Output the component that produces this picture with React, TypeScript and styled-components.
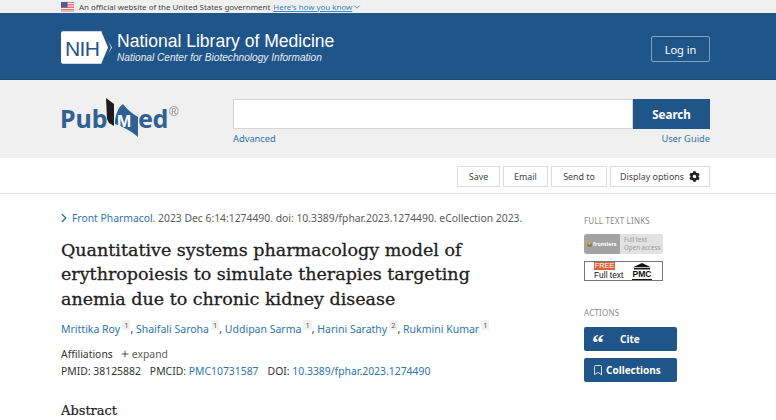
import React from 'react';
import styled, { createGlobalStyle } from 'styled-components';
import { Bookmark, ChevronDown, ChevronRight, Plus } from 'lucide-react';
import { FaCog } from 'react-icons/fa';

const Global = createGlobalStyle`
  html, body { margin: 0; padding: 0; background: #fff; }
  body { width: 776px; height: 420px; overflow: hidden; font-family: "Noto Sans", "Open Sans", sans-serif; color: #212121; }
  a { color: #2e75ad; text-decoration: none; }
`;

const Wrap = styled.div`
  padding: 0 66px 0 61px;
`;

const Banner = styled.div`
  height: 13px;
  background: #f0f0f0;
  overflow: hidden;
`;

const BannerRow = styled(Wrap)`
  display: flex;
  align-items: center;
  height: 13px;
  font-size: 7.95px;
  color: #444;
  svg.flag { margin-right: 5px; }
`;

const HowLink = styled.a`
  display: inline-flex;
  align-items: center;
  margin-left: 3px;
  color: #3b85c0;
  text-decoration: underline;
`;

const Header = styled.div`
  height: 67px;
  background: #20558a;
  border-bottom: 1px solid #1a4a78;
  box-sizing: border-box;
`;

const HeaderRow = styled(Wrap)`
  display: flex;
  align-items: center;
  justify-content: space-between;
  height: 100%;
  padding-top: 3px;
  box-sizing: border-box;
`;

const Brand = styled.div`
  display: flex;
  align-items: center;
  gap: 5px;
  color: #fff;
  font-family: "Liberation Sans", Arial, sans-serif;
`;

const BrandName = styled.div`
  font-size: 17.55px;
  line-height: 21px;
`;

const BrandSub = styled.div`
  font-size: 10.15px;
  font-style: italic;
  line-height: 12px;
  color: #e6edf4;
`;

const LoginButton = styled.button`
  width: 59px;
  height: 26px;
  margin-top: 3px;
  padding: 0;
  background: transparent;
  border: 1px solid #7fa3c5;
  border-radius: 2px;
  color: #fff;
  font: 11px "Noto Sans", sans-serif;
`;

const SearchArea = styled.div`
  height: 78px;
  background: #f0f0f0;
`;

const SearchRow = styled(Wrap)`
  display: flex;
  gap: 52px;
  padding-top: 19px;
`;

const Logo = styled.div`
  width: 120px;
  margin-top: -3px;
`;

const SearchBlock = styled.div`
  flex: 1;
`;

const SearchBox = styled.div`
  display: flex;
  height: 30px;
`;

const SearchInput = styled.div`
  flex: 1;
  box-sizing: border-box;
  background: #fff;
  border: 1px solid #d6d6d6;
`;

const SearchButton = styled.button`
  width: 77px;
  padding: 0;
  border: 0;
  background: #20558a;
  color: #fff;
  font: 700 11.6px "Noto Sans", sans-serif;
`;

const SearchLinks = styled.div`
  display: flex;
  justify-content: space-between;
  margin-top: 3px;
  font-size: 9.3px;
  line-height: 14px;
`;

const Toolbar = styled(Wrap)`
  display: flex;
  justify-content: flex-end;
  gap: 3px;
  height: 36px;
  padding-top: 8px;
  box-sizing: border-box;
  border-bottom: 1px solid #e4e4e4;
`;

const ToolButton = styled.button<{ $w: number }>`
  display: flex;
  align-items: center;
  justify-content: center;
  gap: 5px;
  width: ${(p) => p.$w}px;
  height: 21px;
  padding: 0;
  background: #fff;
  border: 1px solid #dcdcdc;
  color: #444;
  font: 8.9px "Noto Sans", sans-serif;
`;

const Main = styled(Wrap)`
  display: flex;
  justify-content: space-between;
`;

const Article = styled.div`
  width: 480px;
  padding-top: 16px;
`;

const Citation = styled.div`
  display: flex;
  align-items: center;
  font-size: 10.35px;
  line-height: 16px;
  color: #5b5b5b;
  white-space: pre;
  svg { margin: 0 1px 0 -4px; color: #2e75ad; }
`;

const Title = styled.h1`
  margin: 12px 0 0;
  width: 440px;
  font-family: "DejaVu Serif", serif;
  font-size: 17.5px;
  font-weight: 400;
  -webkit-text-stroke: 0.3px #212121;
  line-height: 24.3px;
  color: #212121;
`;

const Authors = styled.div`
  margin-top: 10px;
  font-size: 10.5px;
  line-height: 16px;
  color: #333;
  white-space: nowrap;
  sup { margin-left: 2px; padding: 0 2px; background: #f1f1f1; color: #555; font-size: 7.5px; line-height: 0; }
`;

const AffiliationRow = styled.div`
  display: flex;
  align-items: center;
  margin-top: 9px;
  font-size: 10.4px;
  line-height: 16px;
  color: #333;
`;

const Expand = styled.span`
  display: inline-flex;
  align-items: center;
  gap: 2px;
  margin-left: 7px;
  color: #5b5b5b;
`;

const Ids = styled.div`
  display: flex;
  gap: 9px;
  margin-top: 1px;
  font-size: 10.4px;
  line-height: 16px;
  color: #333;
`;

const AbstractTitle = styled.h2`
  margin: 23px 0 0;
  font-family: "DejaVu Serif", serif;
  font-size: 13px;
  font-weight: 400;
  line-height: 18px;
  -webkit-text-stroke: 0.2px #212121;
`;

const Side = styled.div`
  width: 126px;
  padding-top: 21px;
`;

const SideHeading = styled.div<{ $gap?: number }>`
  margin-top: ${(p) => p.$gap ?? 0}px;
  font-size: 8px;
  line-height: 12px;
  color: #8a8a8a;
  letter-spacing: 0.2px;
`;

const FrontiersBadge = styled.div`
  display: flex;
  width: 79px;
  height: 20px;
  margin-top: 7px;
  border-radius: 3px;
  overflow: hidden;
  background: #e2e2e2;
`;

const FrontiersName = styled.div`
  display: flex;
  align-items: center;
  gap: 1px;
  width: 36px;
  padding-left: 3px;
  box-sizing: border-box;
  background: #a3a3a3;
  color: #fff;
  font-size: 5.4px;
  font-weight: 700;
`;

const FrontiersDot = styled.span`
  width: 5px;
  height: 5px;
  border-radius: 50%;
  background: conic-gradient(#d8b13a, #c8503c, #4c9a52, #d8b13a);
`;

const FrontiersText = styled.div`
  padding: 2px 0 0 4px;
  color: #9a9a9a;
  font-size: 6.2px;
  line-height: 8px;
  white-space: nowrap;
`;

const PmcBadge = styled.div`
  display: flex;
  justify-content: space-between;
  box-sizing: border-box;
  width: 79px;
  height: 20px;
  margin-top: 7px;
  padding: 0 10px 0 9px;
  border: 1px solid #777;
  background: #fff;
`;

const FreeLabel = styled.div`
  font-family: "Liberation Sans", sans-serif;
  color: #111;
  font-size: 8.4px;
  line-height: 10px;
  span { display: block; width: 21px; background: #d9643a; color: #fff; text-align: center; line-height: 8px; font-size: 7.4px; }
`;

const PmcMark = styled.div`
  display: flex;
  flex-direction: column;
  align-items: center;
  font: 700 8.6px/9px "Liberation Sans", sans-serif;
  color: #111;
  b { border-bottom: 1px solid #111; }
`;

const ActionButton = styled.button<{ $gap?: number }>`
  display: flex;
  align-items: center;
  gap: 2px;
  width: 93px;
  height: 24px;
  margin-top: ${(p) => p.$gap ?? 7}px;
  padding: 0 0 0 8px;
  border: 0;
  border-radius: 2px;
  background: #20558a;
  color: #fff;
  font: 700 10px "Noto Sans", sans-serif;
`;

const QuoteMark = styled.span`
  width: 24px;
  margin-right: 2px;
  text-align: left;
  font: 700 24px/10px "Liberation Serif", serif;
  transform: translateY(3px);
`;

const NihLogo = () => (
  <svg width="51" height="33" viewBox="0 0 52 33">
    <path d="M2 0H42L52 16.5 42 33H2Q0 33 0 31V2Q0 0 2 0Z" fill="#fff" />
    <path d="M44 0L51 16.5 44 33H41L48 16.5 41 0Z" fill="#20558a" />
    <text x="4" y="25" fontFamily="Liberation Sans" fontSize="21.5" fill="#20558a" letterSpacing="-0.6">NIH</text>
  </svg>
);

const UsFlag = () => (
  <svg className="flag" width="13" height="10" viewBox="0 0 13 10">
    <rect width="13" height="10" fill="#e2786e" />
    <path d="M0 1.5H13M0 4H13M0 6.5H13M0 9H13" stroke="#f6f0ee" strokeWidth="1" />
    <rect width="6.5" height="5.5" fill="#4a5f9a" />
  </svg>
);

const PubMedLogo = () => (
  <svg width="122" height="46" viewBox="0 0 122 46">
    <text x="-1" y="32" fontFamily="Noto Sans" fontWeight="700" fontSize="25" fill="#2f6195">Pub</text>
    <path d="M45 2L53 8V30L48 27 46 23Z" fill="#1c1c1c" />
    <path d="M54 24Q56 12 62 8 68 16 77 21V41Q68 33 54 28Z" fill="#2f6195" />
    <text x="56" y="31" fontFamily="Liberation Sans" fontWeight="700" fontSize="17" fill="#fff">M</text>
    <text x="77" y="32" fontFamily="Noto Sans" fontWeight="700" fontSize="25" fill="#2f6195" letterSpacing="-0.5">ed</text>
    <text x="108" y="20" fontFamily="Liberation Sans" fontSize="13" fill="#8a8a8a">®</text>
  </svg>
);

export default function App() {
  return (
    <>
      <Global />
      <Banner>
        <BannerRow>
          <UsFlag />
          An official website of the United States government
          <HowLink href="#">
            Here's how you know
            <ChevronDown size={10} strokeWidth={2} />
          </HowLink>
        </BannerRow>
      </Banner>
      <Header>
        <HeaderRow>
          <Brand>
            <NihLogo />
            <div>
              <BrandName>National Library of Medicine</BrandName>
              <BrandSub>National Center for Biotechnology Information</BrandSub>
            </div>
          </Brand>
          <LoginButton>Log in</LoginButton>
        </HeaderRow>
      </Header>
      <SearchArea>
        <SearchRow>
          <Logo>
            <PubMedLogo />
          </Logo>
          <SearchBlock>
            <SearchBox>
              <SearchInput />
              <SearchButton>Search</SearchButton>
            </SearchBox>
            <SearchLinks>
              <a href="#">Advanced</a>
              <a href="#">User Guide</a>
            </SearchLinks>
          </SearchBlock>
        </SearchRow>
      </SearchArea>
      <Toolbar>
        <ToolButton $w={43}>Save</ToolButton>
        <ToolButton $w={45}>Email</ToolButton>
        <ToolButton $w={56}>Send to</ToolButton>
        <ToolButton $w={100}>
          Display options
          <FaCog size={11} color="#222" />
        </ToolButton>
      </Toolbar>
      <Main>
        <Article>
          <Citation>
            <ChevronRight size={14} strokeWidth={2.5} />
            <a href="#">Front Pharmacol</a>. 2023 Dec 6:14:1274490. doi: 10.3389/fphar.2023.1274490. eCollection 2023.
          </Citation>
          <Title>Quantitative systems pharmacology model of erythropoiesis to simulate therapies targeting anemia due to chronic kidney disease</Title>
          <Authors>
            <a href="#">Mrittika Roy</a><sup>1</sup>, <a href="#">Shaifali Saroha</a><sup>1</sup>, <a href="#">Uddipan Sarma</a><sup>1</sup>, <a href="#">Harini Sarathy</a><sup>2</sup>, <a href="#">Rukmini Kumar</a><sup>1</sup>
          </Authors>
          <AffiliationRow>
            Affiliations
            <Expand>
              <Plus size={10} strokeWidth={2} color="#333" />
              expand
            </Expand>
          </AffiliationRow>
          <Ids>
            <span>PMID: 38125882</span>
            <span>PMCID: <a href="#">PMC10731587</a></span>
            <span>DOI: <a href="#">10.3389/fphar.2023.1274490</a></span>
          </Ids>
          <AbstractTitle>Abstract</AbstractTitle>
        </Article>
        <Side>
          <SideHeading>FULL TEXT LINKS</SideHeading>
          <FrontiersBadge>
            <FrontiersName>
              <FrontiersDot />
              frontiers
            </FrontiersName>
            <FrontiersText>
              Full text
              <br />
              Open access
            </FrontiersText>
          </FrontiersBadge>
          <PmcBadge>
            <FreeLabel>
              <span>FREE</span>
              Full text
            </FreeLabel>
            <PmcMark>
              <svg width="20" height="9" viewBox="0 0 20 9">
                <path d="M10 1L20 6H0Z" fill="#111" />
                <rect x="1" y="6.8" width="18" height="1.6" fill="#111" />
              </svg>
              <b>PMC</b>
            </PmcMark>
          </PmcBadge>
          <SideHeading $gap={26}>ACTIONS</SideHeading>
          <ActionButton $gap={8}>
            <QuoteMark>“</QuoteMark>
            Cite
          </ActionButton>
          <ActionButton>
            <Bookmark size={12} strokeWidth={1.6} />
            Collections
          </ActionButton>
        </Side>
      </Main>
    </>
  );
}
